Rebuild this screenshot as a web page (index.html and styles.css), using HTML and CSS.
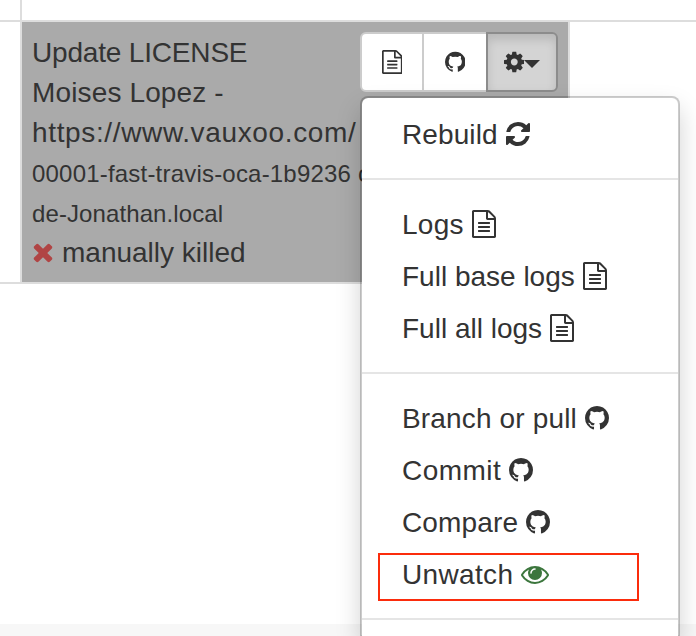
FILE: index.html
```
<!DOCTYPE html>
<html lang="en">
<head>
<meta charset="utf-8">
<title>Builds</title>
<link rel="stylesheet" href="styles.css">
</head>
<body>
<svg class="defs" width="0" height="0" aria-hidden="true">
  <symbol id="file" viewBox="128 0 1536 1792"><path d="M1596 380q28 28 48 76t20 88v1152q0 40-28 68t-68 28h-1344q-40 0-68-28t-28-68v-1600q0-40 28-68t68-28h896q40 0 88 20t76 48zm-444-244v376h376q-10-29-22-41l-313-313q-12-12-41-22zm384 1528v-1024h-416q-40 0-68-28t-28-68v-416h-768v1536h1280zm-1024-864q0-14 9-23t23-9h704q14 0 23 9t9 23v64q0 14-9 23t-23 9h-704q-14 0-23-9t-9-23v-64zm736 224q14 0 23 9t9 23v64q0 14-9 23t-23 9h-704q-14 0-23-9t-9-23v-64q0-14 9-23t23-9h704zm0 256q14 0 23 9t9 23v64q0 14-9 23t-23 9h-704q-14 0-23-9t-9-23v-64q0-14 9-23t23-9h704z"/></symbol>
  <symbol id="github" viewBox="0 0 1536 1792"><path d="M768 128q209 0 385.500 103t279.500 279.500 103 385.500q0 251-146.500 451.500t-378.500 277.500q-27 5-40-7t-13-30q0-3 .5-76.500t.5-134.500q0-97-52-142 57-6 102.500-18t94-39 81-66.500 53-105 20.500-150.500q0-119-79-206 37-91-8-204-28-9-81 11t-92 44l-38 24q-93-26-192-26t-192 26q-16-11-42.500-27t-83.500-38.500-85-13.500q-45 113-8 204-79 87-79 206 0 85 20.500 150t52.500 105 80.500 67 94 39 102.500 18q-39 36-49 103-21 10-45 15t-57 5-65.500-21.500-55.500-62.500q-19-32-48.500-52t-49.500-24l-20-3q-21 0-29 4.500t-5 11.500 9 14 13 12l7 5q22 10 43.500 38t31.500 51l10 23q13 38 44 61.500t67 30 69.500 7 55.500-3.500l23-4q0 38 .5 88.500t.5 54.500q0 18-13 30t-40 7q-232-77-378.500-277.500t-146.500-451.500q0-209 103-385.500t279.500-279.500 385.500-103z"/></symbol>
  <symbol id="cog" viewBox="128 0 1536 1792"><path d="M1152 896q0-106-75-181t-181-75-181 75-75 181 75 181 181 75 181-75 75-181zm512-109v222q0 12-8 23t-20 13l-185 28q-19 54-39 91 35 50 107 138 10 12 10 25t-9 23q-27 37-99 108t-94 71q-12 0-26-9l-138-108q-44 23-91 38-16 136-29 186-7 28-36 28h-222q-14 0-24.500-8.500t-11.500-21.500l-28-184q-49-16-90-37l-141 107q-10 9-25 9-14 0-25-11-126-114-165-168-7-10-7-23 0-12 8-23 15-21 51-66.500t54-70.500q-27-50-41-99l-183-27q-13-2-21-12.500t-8-23.500v-222q0-12 8-23t19-13l186-28q14-46 39-92-40-57-107-138-10-12-10-24 0-10 9-23 26-36 98.500-107.500t94.500-71.500q13 0 26 10l138 107q44-23 91-38 16-136 29-186 7-28 36-28h222q14 0 24.500 8.500t11.500 21.500l28 184q49 16 90 37l142-107q9-9 24-9 13 0 25 10 129 119 165 170 7 8 7 22 0 12-8 23-15 21-51 66.500t-54 70.500q26 50 41 98l183 28q13 2 21 12.500t8 23.500z"/></symbol>
  <symbol id="refresh" viewBox="128 0 1536 1792"><path d="M1639 1056q0 5-1 7-64 268-268 434.500t-478 166.500q-146 0-282.500-55t-243.500-157l-129 129q-19 19-45 19t-45-19-19-45v-448q0-26 19-45t45-19h448q26 0 45 19t19 45-19 45l-137 137q71 66 161 102t187 36q134 0 250-65t186-179q11-17 53-117 8-23 30-23h192q13 0 22.500 9.500t9.500 22.500zm25-800v448q0 26-19 45t-45 19h-448q-26 0-45-19t-19-45 19-45l138-138q-148-137-349-137-134 0-250 65t-186 179q-11 17-53 117-8 23-30 23h-199q-13 0-22.500-9.500t-9.500-22.500v-7q65-268 270-434.500t480-166.500q146 0 284 55.500t245 156.500l130-129q19-19 45-19t45 19 19 45z"/></symbol>
  <symbol id="eye" viewBox="0 0 1792 1792"><path d="M1664 960q-152-236-381-353 61 104 61 225 0 185-131.500 316.500t-316.500 131.500-316.500-131.500-131.500-316.500q0-121 61-225-229 117-381 353 133 205 333.500 326.500t434.500 121.500 434.500-121.500 333.500-326.500zm-720-384q0-20-14-34t-34-14q-125 0-214.500 89.500t-89.500 214.500q0 20 14 34t34 14 34-14 14-34q0-86 61-147t147-61q20 0 34-14t14-34zm848 384q0 34-20 69-140 230-376.500 368.500t-499.500 138.500-499.500-139-376.500-368q-20-35-20-69t20-69q140-229 376.500-368t499.500-139 499.500 139 376.500 368q20 35 20 69z"/></symbol>
  <symbol id="times" viewBox="192 0 1408 1792"><path d="M1490 1322q0 40-28 68l-136 136q-28 28-68 28t-68-28l-294-294-294 294q-28 28-68 28t-68-28l-136-136q-28-28-28-68t28-68l294-294-294-294q-28-28-28-68t28-68l136-136q28-28 68-28t68 28l294 294 294-294q28-28 68-28t68 28l136 136q28 28 28 68t-28 68l-294 294 294 294q28 28 28 68z"/></symbol>
</svg>
<div class="builds">
  <div class="cell"></div><div class="cell wide"></div><div class="cell last"></div>
  <div class="cell"></div>
  <div class="cell killed">
    <div class="info">
      <div class="t-title">Update LICENSE</div>
      <div class="t-author">Moises Lopez -</div>
      <div class="t-url">https://www.vauxoo.com/</div>
      <div class="small t-dest">00001-fast-travis-oca-1b9236 on</div>
      <div class="small t-host">de-Jonathan.local</div>
      <div class="status"><svg class="times"><use href="#times"/></svg><span>manually killed</span></div>
    </div>
    <div class="group">
      <div class="btn"><svg class="sm"><use href="#file"/></svg></div>
      <div class="btn hub"><svg class="sm"><use href="#github"/></svg></div>
      <div class="btn open"><svg class="sm"><use href="#cog"/></svg><i class="caret"></i></div>
      <div class="menu">
        <div class="item m-rebuild"><span>Rebuild</span><svg><use href="#refresh"/></svg></div>
        <div class="divider"></div>
        <div class="item m-logs"><span>Logs</span><svg><use href="#file"/></svg></div>
        <div class="item"><span>Full base logs</span><svg><use href="#file"/></svg></div>
        <div class="item"><span>Full all logs</span><svg><use href="#file"/></svg></div>
        <div class="divider"></div>
        <div class="item m-branch"><span>Branch or pull</span><svg><use href="#github"/></svg></div>
        <div class="item m-commit"><span>Commit</span><svg><use href="#github"/></svg></div>
        <div class="item m-compare"><span>Compare</span><svg><use href="#github"/></svg></div>
        <div class="item m-unwatch marked"><span>Unwatch</span><svg class="eye"><use href="#eye"/></svg></div>
        <div class="divider end"></div>
      </div>
    </div>
  </div>
</div>
<div class="footer"></div>
</body>
</html>
```
FILE: styles.css
```
*, *::after { box-sizing: border-box; }
body {
  margin: 0;
  height: 636px;
  overflow: hidden;
  display: flex;
  flex-direction: column;
  background: #fff;
  color: #333;
  font: 28px/40px "Liberation Sans", Arial, sans-serif;
  white-space: nowrap;
}
.defs { position: absolute; }
svg { fill: currentColor; flex: none; }
.builds {
  display: grid;
  grid-template-columns: 22px 548px 126px;
  grid-template-rows: 22px 262px;
}
.cell { border-right: 2px solid #ddd; border-bottom: 2px solid #ddd; }
.wide, .last { border-right: 0; }
.killed {
  display: flex;
  justify-content: space-between;
  align-items: flex-start;
  padding: 10px;
  background: #aaa;
  background-clip: padding-box;
}
.info { width: 328px; padding-top: 1px; }
.small { font-size: 24px; padding-top: 1px; height: 40px; }
.t-title { letter-spacing: -.18px; }
.t-author { letter-spacing: .14px; }
.t-url { letter-spacing: .64px; }
.t-dest { letter-spacing: .2px; }
.t-host { letter-spacing: .1px; }
.status { display: flex; align-items: center; gap: 8px; }
.times { width: 22px; height: 28px; margin-top: -2px; color: #b04444; }
.group { display: flex; position: relative; height: 60px; width: 198px; flex: none; }
.btn {
  display: flex;
  align-items: center;
  justify-content: center;
  width: 64px;
  border: 2px solid #ccc;
  background: #fff;
}
.btn:first-child { border-radius: 6px 0 0 6px; }
.btn.hub { border-left: 0; border-right: 0; width: 62px; }
.btn.open {
  width: 72px;
  border-color: #8c8c8c;
  border-radius: 0 6px 6px 0;
  background: #d4d4d4;
  box-shadow: inset 0 6px 10px rgba(0,0,0,.125);
}
.sm { width: 20.57px; height: 24px; margin-top: -1px; }
.caret { margin-top: 4px; border: 8px solid transparent; border-top-color: #333; border-bottom: 0; }
.menu {
  position: absolute;
  z-index: 2;
  top: 64px;
  left: 0;
  width: 320px;
  height: 540px;
  padding-top: 10px;
  border: 2px solid rgba(0,0,0,.2);
  border-bottom: 0;
  border-radius: 8px 8px 0 0;
  background: #fff;
  background-clip: padding-box;
  box-shadow: 0 12px 24px rgba(0,0,0,.175);
}
.item { display: flex; align-items: center; gap: 8px; height: 52px; padding-left: 40px; }
.item span { padding-top: 2px; }
.item svg { width: 24px; height: 28px; }
.item .eye { width: 28px; color: #3c763d; }
.m-rebuild span { letter-spacing: .1px; }
.m-logs span { letter-spacing: .25px; }
.m-branch span { letter-spacing: .16px; }
.m-commit span { letter-spacing: .45px; }
.m-compare span { letter-spacing: .15px; }
.m-unwatch span { letter-spacing: .35px; }
.divider { height: 2px; margin: 18px 0; background: #e5e5e5; }
.divider.end { margin-bottom: 0; }
.marked { position: relative; }
.marked::after {
  content: "";
  position: absolute;
  left: 16px;
  top: 5px;
  width: 261px;
  height: 48px;
  border: 2px solid #fb2c0c;
}
.footer { margin-top: auto; height: 12px; background: #f7f7f7; }
```
